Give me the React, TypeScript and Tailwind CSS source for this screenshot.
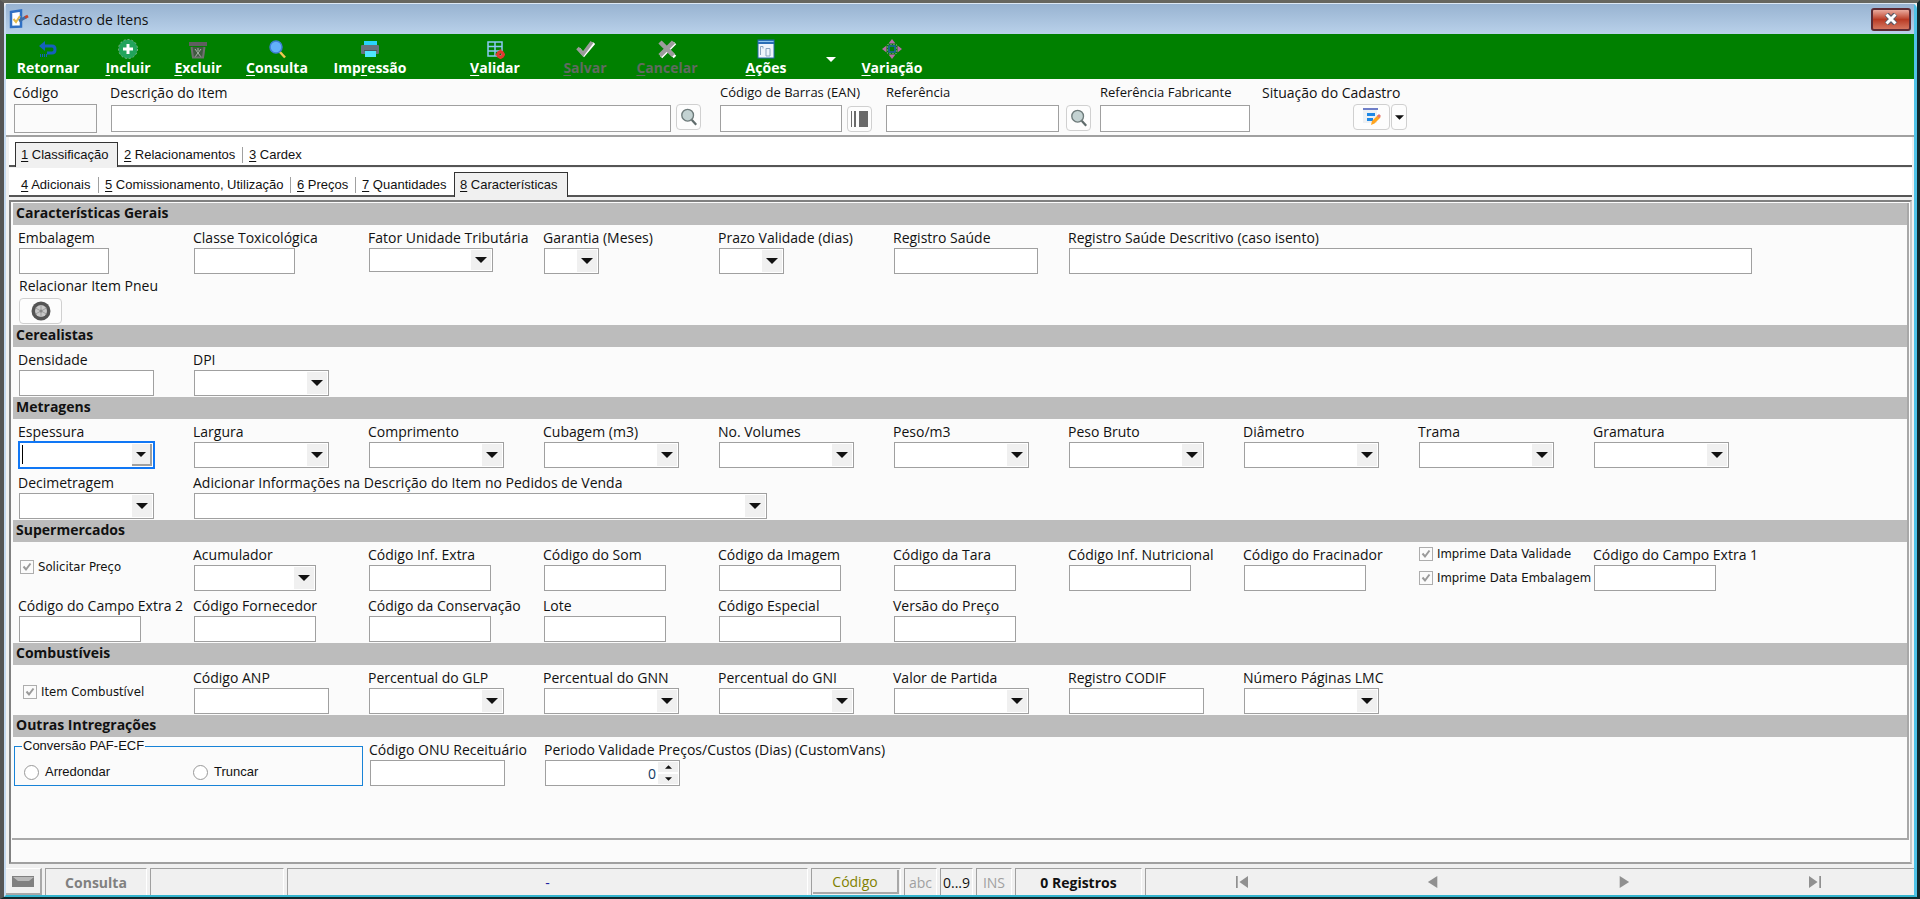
import { useId, useState } from 'react'
import type { ReactNode } from 'react'
import clsx from 'clsx'

// Underlines the shortcut letter of a caption
function Hotkey({ text, at = 0 }: { text: string; at?: number }) {
  return (
    <>
      {text.slice(0, at)}
      <span className="underline underline-offset-2">{text[at]}</span>
      {text.slice(at + 1)}
    </>
  )
}

function Arrow({ size = 'h-[6px] w-[12px]', flip = false }: { size?: string; flip?: boolean }) {
  return (
    <svg className={clsx(size, flip && 'rotate-180')} viewBox="0 0 12 6" fill="currentColor">
      <path d="M0 0h12L6 6z" />
    </svg>
  )
}

const labelClass = '-ml-px block h-[23px] pt-[2px] leading-[21px] whitespace-nowrap'

function TextField({ label, width = 'w-[135px]', cell = 'w-[175px]' }: { label: string; width?: string; cell?: string }) {
  const id = useId()
  return (
    <div className={clsx('h-[50px] shrink-0', cell)}>
      <label htmlFor={id} className={labelClass}>{label}</label>
      <input id={id} type="text" className={clsx('block h-[26px] border border-[#a0a0a0] bg-white px-1 outline-none', width)} />
    </div>
  )
}

function ComboField({ label, width = 'w-[135px]', cell = 'w-[175px]', height = 'h-[26px]', focused = false }: {
  label: string
  width?: string
  cell?: string
  height?: string
  focused?: boolean
}) {
  const id = useId()
  return (
    <div className={clsx('h-[50px] shrink-0', cell)}>
      <label htmlFor={id} className={labelClass}>{label}</label>
      <div className={clsx('relative border bg-white', width, height, focused ? 'border-[#1077f5] ring-1 ring-[#1077f5]' : 'border-[#a0a0a0]')}>
        <select id={id} className="block h-full w-full appearance-none bg-transparent px-1 outline-none">
          <option></option>
        </select>
        {focused && <span className="pointer-events-none absolute top-[2px] bottom-[3px] left-[2px] w-px bg-black" />}
        <span
          className={clsx(
            'pointer-events-none absolute top-px right-px bottom-px flex w-[20px] items-center justify-center bg-[#f0f0f0]',
            focused && 'border-r-2 border-b-2 border-[#a0a0a0]'
          )}
        >
          <Arrow size={focused ? 'h-[5px] w-[10px]' : undefined} />
        </span>
      </div>
    </div>
  )
}

function CheckField({ label }: { label: string }) {
  const [checked, setChecked] = useState(true)
  return (
    <label className="flex h-[24px] items-center gap-1 font-['DejaVu_Sans_Condensed','DejaVu_Sans',sans-serif] text-[13px] whitespace-nowrap">
      <span className="relative size-[14px]">
        <input
          type="checkbox"
          checked={checked}
          onChange={e => setChecked(e.target.checked)}
          className="block size-[14px] appearance-none border border-[#adadad] bg-[#fbfbfb]"
        />
        {checked && (
          <svg className="pointer-events-none absolute inset-0 size-[14px]" viewBox="0 0 14 14" fill="none" stroke="#9a9a9a" strokeWidth="2">
            <path d="M3.5 6.5L6 9.5l4.500-6" />
          </svg>
        )}
      </span>
      {label}
    </label>
  )
}

function Section({ title, children }: { title: string; children: ReactNode }) {
  return (
    <section>
      <h2 className="h-[22px] bg-[#bcbcbc] pl-[3px] leading-[20px] font-bold">{title}</h2>
      <div className="flex flex-col gap-px">{children}</div>
    </section>
  )
}

function Row({ children }: { children: ReactNode }) {
  return <div className="flex pl-[6px]">{children}</div>
}

function ToolButton({ label, at, width, disabled, icon }: {
  label: string
  at?: number
  width: string
  disabled?: boolean
  icon: ReactNode
}) {
  return (
    <button
      type="button"
      disabled={disabled}
      className={clsx('flex h-[45px] flex-col items-center gap-px pt-[5px] leading-[16px] font-bold', width, disabled ? 'text-[#5f6b5f]' : 'text-white')}
    >
      <svg className="size-[20px]" viewBox="0 0 20 20" fill="none">{icon}</svg>
      <span className="whitespace-nowrap">{at === undefined ? label : <Hotkey text={label} at={at} />}</span>
    </button>
  )
}

function Toolbar() {
  return (
    <nav className="flex h-[45px] bg-[#008000]">
      <ToolButton
        label="Retornar"
        width="w-[84px]"
        icon={
          <>
            <path d="M5 7h9q3 0 3 3.500T14 14H9" stroke="#1560bd" strokeWidth="3" />
            <path d="M1 7l6-5v10z" fill="#1560bd" />
            <path d="M2 16.500h8" stroke="#1560bd" strokeWidth="3" strokeDasharray="1 1" />
          </>
        }
      />
      <ToolButton
        label="Incluir"
        at={0}
        width="w-[76px]"
        icon={
          <>
            <circle cx="10" cy="10" r="9.500" fill="#22a45c" stroke="#7fb08a" strokeDasharray="2 2" />
            <path d="M10 5v10M5 10h10" stroke="#fff" strokeWidth="3" />
          </>
        }
      />
      <ToolButton
        label="Excluir"
        at={0}
        width="w-[64px]"
        icon={
          <>
            <path d="M1 3h18v4H1z" fill="#5f5f5f" />
            <path d="M3 8h14l-1 11H4z" fill="#3f5a3f" />
            <path d="M7 10l6 8M13 10l-6 8M10 9v3" stroke="#a9b5a9" />
            <path d="M3.500 8l1.500 10.500h10L16.500 8" stroke="#6f6f6f" strokeWidth="2" />
          </>
        }
      />
      <ToolButton
        label="Consulta"
        at={0}
        width="w-[94px]"
        icon={
          <>
            <path d="M12.500 12.500l5.500 6" stroke="#f0c850" strokeWidth="2.500" />
            <circle cx="9" cy="8" r="6" fill="#62b0fa" stroke="#3d7fd6" strokeWidth="1.500" />
          </>
        }
      />
      <ToolButton
        label="Impressão"
        at={3}
        width="w-[92px]"
        icon={
          <>
            <rect x="4" y="2" width="13" height="5" fill="#29d5fb" />
            <rect x="1" y="6" width="18" height="9" rx="1" fill="#66727e" />
            <rect x="5" y="12" width="11" height="6" fill="#4fe6ff" />
            <path d="M4 11.500h13" stroke="#4c565f" />
          </>
        }
      />
      <span className="w-[36px]" />
      <ToolButton
        label="Validar"
        at={0}
        width="w-[86px]"
        icon={
          <>
            <path d="M3 3h14v14H3zM3 7.500h14M3 12h14M10 3v14" stroke="#8cc8f5" strokeWidth="1.500" />
            <circle cx="15.500" cy="15.500" r="2.500" stroke="#e03a2f" strokeWidth="3" />
            <path d="M15.500 10.500v10M10.500 15.500h10" stroke="#e03a2f" strokeDasharray="2 6" strokeWidth="2" />
          </>
        }
      />
      <ToolButton
        label="Salvar"
        at={0}
        width="w-[94px]"
        disabled
        icon={
          <>
            <path d="M4 10l5 6 10-12" stroke="#fff" strokeWidth="3" />
            <path d="M2.500 9l5.500 6 9-12" stroke="#9c9c9c" strokeWidth="3.500" />
          </>
        }
      />
      <ToolButton
        label="Cancelar"
        at={0}
        width="w-[70px]"
        disabled
        icon={
          <>
            <path d="M4 4l14 14M18 4L4 18" stroke="#fff" strokeWidth="3.500" />
            <path d="M3 3l13.500 13.500M16.500 3L3 16.500" stroke="#9c9c9c" strokeWidth="4.500" />
          </>
        }
      />
      <span className="w-[28px]" />
      <ToolButton
        label="Ações"
        at={0}
        width="w-[72px]"
        icon={
          <>
            <rect x="2" y="1" width="16" height="18" fill="#eef4fb" stroke="#2566a8" />
            <path d="M2 3h16" stroke="#2a6db5" strokeWidth="4" />
            <path d="M2.500 2.500h15" stroke="#8fc4ee" />
            <path d="M4.500 16V7.500h2.500v2M10 17V9.500h4V17z" stroke="#8aa5c0" />
          </>
        }
      />
      <button type="button" aria-label="Mais ações" className="ml-[16px] flex w-[26px] items-center justify-center pt-[5px] text-white">
        <Arrow size="h-[5px] w-[10px]" />
      </button>
      <ToolButton
        label="Variação"
        at={0}
        width="w-[96px]"
        icon={
          <>
            <rect x="7" y="7" width="6" height="6" stroke="#1f5fa8" strokeWidth="1.500" />
            <path d="M10 0l3.500 4.500h-7zM10 20l3.500-4.500h-7zM0 10l4.500-3.500v7zM20 10l-4.500-3.500v7z" fill="#b86aa8" />
            <path d="M5.500 5.500h9v9h-9z" stroke="#9fb09f" strokeDasharray="1 2" />
          </>
        }
      />
    </nav>
  )
}

function HeaderField({ label, width, locked = false, small = false }: {
  label: string
  width: string
  locked?: boolean
  small?: boolean
}) {
  const id = useId()
  return (
    <div>
      <label
        htmlFor={id}
        className={clsx('block pt-[2px] leading-[23px] whitespace-nowrap', small ? 'text-[13px]' : '-ml-px', locked ? 'h-[25px]' : 'h-[26px]')}
      >
        {label}
      </label>
      <input
        id={id}
        type="text"
        readOnly={locked}
        className={clsx('block border border-[#a0a0a0] px-1 outline-none', width, locked ? 'h-[29px] bg-[#fbfbfb]' : 'h-[27px] bg-white')}
      />
    </div>
  )
}

function IconButton({ label, children, className = 'w-[25px]' }: { label: string; children: ReactNode; className?: string }) {
  return (
    <button type="button" aria-label={label} className={clsx('flex h-[26px] items-center justify-center rounded-[4px] border border-[#d0d0d0] bg-[#fdfdfd]', className)}>
      {children}
    </button>
  )
}

function SearchIcon() {
  return (
    <svg className="size-[18px]" viewBox="0 0 20 20" fill="none">
      <path d="M13 13l5 5.500" stroke="#5f6b6b" strokeWidth="2.500" />
      <circle cx="8.500" cy="8" r="6.500" fill="#c3d2d2" stroke="#6d7a7a" strokeWidth="1.500" />
    </svg>
  )
}

function Header() {
  return (
    <div className="flex h-[58px] items-start border-b-2 border-[#a0a0a0] bg-[#fbfbfb] pl-[8px]">
      <HeaderField label="Código" width="w-[83px]" locked />
      <div className="ml-[14px]">
        <HeaderField label="Descrição do Item" width="w-[560px]" />
      </div>
      <div className="ml-[5px] pt-[25px]">
        <IconButton label="Pesquisar item"><SearchIcon /></IconButton>
      </div>
      <div className="ml-[19px] w-[127px]">
        <HeaderField label="Código de Barras (EAN)" width="w-[122px]" small />
      </div>
      <div className="pt-[27px]">
        <IconButton label="Gerar código de barras">
          <svg className="h-[16px] w-[17px]" viewBox="0 0 17 16" fill="#6a6a6a">
            <path d="M0 0h1v16H0zM3 0h2v16H3zM8 0h9v16H8z" />
          </svg>
        </IconButton>
      </div>
      <div className="ml-[14px]">
        <HeaderField label="Referência" width="w-[173px]" small />
      </div>
      <div className="ml-[7px] pt-[26px]">
        <IconButton label="Pesquisar referência"><SearchIcon /></IconButton>
      </div>
      <div className="ml-[9px]">
        <HeaderField label="Referência Fabricante" width="w-[150px]" small />
      </div>
      <div className="ml-[12px] w-[145px]">
        <p className="h-[25px] pt-[2px] leading-[23px] whitespace-nowrap">Situação do Cadastro</p>
        <div className="flex justify-end gap-px">
          <IconButton label="Situação do cadastro" className="w-[37px]">
            <svg className="size-[18px]" viewBox="0 0 18 18">
              <rect x="0" y="2" width="14" height="13" fill="#eef1f4" />
              <rect x="0" y="0" width="15" height="2" fill="#6f7fc8" />
              <path d="M4 5h8v3H4zM4 10h6v3H4z" fill="#1e88e5" />
              <path d="M8 17l1-4 6-6 2.500 2.500-6 6z" fill="#ffa51f" />
              <path d="M14 8l2-2 2 2-2 2z" fill="#e57373" />
            </svg>
          </IconButton>
          <IconButton label="Opções da situação" className="w-[16px]"><Arrow size="h-[5px] w-[9px]" /></IconButton>
        </div>
      </div>
    </div>
  )
}

function Tabs({ items, active }: { items: { label: string; width: string }[]; active: number }) {
  return (
    <div role="tablist" className="flex h-[29px] items-end border-b-2 border-[#555] bg-white pl-[6px] text-[13px]">
      {items.map((tab, i) => (
        <button
          key={tab.label}
          type="button"
          role="tab"
          aria-selected={i === active}
          className={clsx(
            'flex items-center whitespace-nowrap',
            tab.width,
            i === active ? '-mb-[2px] h-[25px] border-x border-t border-[#333] bg-[#f0f0f0] pl-[5px]' : 'h-[20px] pl-[6px]'
          )}
        >
          <span className="grow text-left"><Hotkey text={tab.label} /></span>
          {i !== active && i + 1 !== active && i < items.length - 1 && <span className="h-[16px] w-px bg-[#a0a0a0]" />}
        </button>
      ))}
    </div>
  )
}

const mainTabs = [
  { label: '1 Classificação', width: 'w-[103px]' },
  { label: '2 Relacionamentos', width: 'w-[125px]' },
  { label: '3 Cardex', width: 'w-[66px]' }
]

const subTabs = [
  { label: '4 Adicionais', width: 'w-[84px]' },
  { label: '5 Comissionamento, Utilização', width: 'w-[192px]' },
  { label: '6 Preços', width: 'w-[65px]' },
  { label: '7 Quantidades', width: 'w-[98px]' },
  { label: '8 Características', width: 'w-[114px]' }
]

function RadioOption({ label }: { label: string }) {
  return (
    <label className="flex w-[169px] items-center gap-[6px]">
      <input type="radio" name="conversao" className="size-[15px] appearance-none rounded-full border border-[#999] bg-white checked:border-4 checked:border-[#555]" />
      {label}
    </label>
  )
}

function PeriodField() {
  const [days, setDays] = useState(0)
  return (
    <div className="h-[50px] shrink-0">
      <label htmlFor="periodo" className={labelClass}>Periodo Validade Preços/Custos (Dias) (CustomVans)</label>
      <div className="flex h-[26px] w-[135px] border border-[#a0a0a0] bg-white p-px">
        <input
          id="periodo"
          type="text"
          value={days}
          onChange={e => setDays(Number(e.target.value) || 0)}
          className="w-0 grow px-[2px] text-right text-[#123a63] outline-none"
        />
        <div className="flex w-[20px] flex-col gap-[2px]">
          <button type="button" aria-label="Aumentar" onClick={() => setDays(days + 1)} className="flex grow items-center justify-center bg-[#f0f0f0]">
            <Arrow size="h-[4px] w-[7px]" flip />
          </button>
          <button type="button" aria-label="Diminuir" onClick={() => setDays(days - 1)} className="flex grow items-center justify-center bg-[#f0f0f0]">
            <Arrow size="h-[4px] w-[7px]" />
          </button>
        </div>
      </div>
    </div>
  )
}

function Form() {
  return (
    <div className="grow border-r-2 border-b-2 border-[#a8a8a8] pl-px">
      <Section title="Características Gerais">
        <Row>
          <TextField label="Embalagem" width="w-[90px]" />
          <TextField label="Classe Toxicológica" width="w-[101px]" />
          <ComboField label="Fator Unidade Tributária" width="w-[124px]" height="h-[24px]" />
          <ComboField label="Garantia (Meses)" width="w-[55px]" />
          <ComboField label="Prazo Validade (dias)" width="w-[65px]" />
          <TextField label="Registro Saúde" width="w-[144px]" />
          <TextField label="Registro Saúde Descritivo (caso isento)" width="w-[683px]" cell="w-[683px]" />
        </Row>
        <Row>
          <div className="h-[49px]">
            <p className="h-[22px] leading-[19px] whitespace-nowrap">Relacionar Item Pneu</p>
            <IconButton label="Relacionar item pneu" className="w-[43px]">
              <svg className="size-[20px]" viewBox="0 0 20 20">
                <circle cx="10" cy="10" r="9.500" fill="#555" />
                <circle cx="10" cy="10" r="6" fill="#c8c8c8" />
                <path d="M10 4v12M4.500 7l11 6M15.500 7l-11 6" stroke="#a0a0a0" />
                <circle cx="10" cy="10" r="1.500" fill="#888" />
              </svg>
            </IconButton>
          </div>
        </Row>
      </Section>

      <Section title="Cerealistas">
        <Row>
          <TextField label="Densidade" />
          <ComboField label="DPI" />
        </Row>
      </Section>

      <Section title="Metragens">
        <Row>
          <ComboField label="Espessura" focused />
          <ComboField label="Largura" />
          <ComboField label="Comprimento" />
          <ComboField label="Cubagem (m3)" />
          <ComboField label="No. Volumes" />
          <ComboField label="Peso/m3" />
          <ComboField label="Peso Bruto" />
          <ComboField label="Diâmetro" />
          <ComboField label="Trama" />
          <ComboField label="Gramatura" />
        </Row>
        <Row>
          <ComboField label="Decimetragem" />
          <ComboField label="Adicionar Informações na Descrição do Item no Pedidos de Venda" width="w-[573px]" cell="w-[573px]" />
        </Row>
      </Section>

      <Section title="Supermercados">
        <Row>
          <div className="flex w-[175px] shrink-0 items-center pl-px">
            <CheckField label="Solicitar Preço" />
          </div>
          <ComboField label="Acumulador" width="w-[122px]" />
          <TextField label="Código Inf. Extra" width="w-[122px]" />
          <TextField label="Código do Som" width="w-[122px]" />
          <TextField label="Código da Imagem" width="w-[122px]" />
          <TextField label="Código da Tara" width="w-[122px]" />
          <TextField label="Código Inf. Nutricional" width="w-[122px]" />
          <TextField label="Código do Fracinador" width="w-[122px]" />
          <div className="w-[175px] shrink-0">
            <CheckField label="Imprime Data Validade" />
            <CheckField label="Imprime Data Embalagem" />
          </div>
          <TextField label="Código do Campo Extra 1" width="w-[122px]" />
        </Row>
        <Row>
          <TextField label="Código do Campo Extra 2" width="w-[122px]" />
          <TextField label="Código Fornecedor" width="w-[122px]" />
          <TextField label="Código da Conservação" width="w-[122px]" />
          <TextField label="Lote" width="w-[122px]" />
          <TextField label="Código Especial" width="w-[122px]" />
          <TextField label="Versão do Preço" width="w-[122px]" />
        </Row>
      </Section>

      <Section title="Combustíveis">
        <Row>
          <div className="flex w-[175px] shrink-0 items-center pt-[4px] pl-[4px]">
            <CheckField label="Item Combustível" />
          </div>
          <TextField label="Código ANP" />
          <ComboField label="Percentual do GLP" />
          <ComboField label="Percentual do GNN" />
          <ComboField label="Percentual do GNI" />
          <ComboField label="Valor de Partida" />
          <TextField label="Registro CODIF" />
          <ComboField label="Número Páginas LMC" />
        </Row>
      </Section>

      <Section title="Outras Intregrações">
        <div className="flex pl-px">
          <fieldset className="mr-[7px] h-[49px] w-[346px] shrink-0 border border-[#1883d7] pl-[9px] font-['Liberation_Sans',sans-serif] text-[13px]">
            <legend className="-ml-[2px] px-px leading-[18px]">Conversão PAF-ECF</legend>
            <div className="flex h-[34px] items-center">
              <RadioOption label="Arredondar" />
              <RadioOption label="Truncar" />
            </div>
          </fieldset>
          <TextField label="Código ONU Receituário" />
          <PeriodField />
        </div>
      </Section>
    </div>
  )
}

const navIcons = [
  { label: 'Primeiro', d: 'M0 0h2v14H0zM14 0v14L4 7z' },
  { label: 'Anterior', d: 'M12 0v14L1 7z' },
  { label: 'Próximo', d: 'M2 0v14l11-7z' },
  { label: 'Último', d: 'M0 0v14l10-7zM12 0h2v14h-2z' }
]

const panelClass = 'flex shrink-0 items-center justify-center border-t border-r border-l border-[#a0a0a0] border-r-white'

function StatusBar() {
  return (
    <footer className="flex h-[27px] gap-[3px] bg-[#f0f0f0]">
      <button type="button" aria-label="Teclado" className="flex w-[36px] shrink-0 items-center justify-center border-t border-r-2 border-b-2 border-[#a8a8a8] border-t-white">
        <svg className="h-[11px] w-[22px]" viewBox="0 0 22 11">
          <rect width="22" height="11" fill="#808080" />
          <path d="M1 1l5 4h11l5-4z" fill="#b8b8b8" />
        </svg>
      </button>
      <div className={clsx(panelClass, 'w-[102px] font-bold text-[#808080]')}>Consulta</div>
      <div className={clsx(panelClass, 'w-[134px]')} />
      <div className={clsx(panelClass, 'min-w-[60px] grow text-[#2020a0]')}>-</div>
      <div className={clsx(panelClass, 'w-[90px] p-px')}>
        <button type="button" className="h-full w-full border-r-2 border-b-2 border-[#a8a8a8] text-[#808000]">Código</button>
      </div>
      <div className={clsx(panelClass, 'w-[33px] text-[#a0a0a0]')}>abc</div>
      <div className={clsx(panelClass, 'w-[33px]')}>0...9</div>
      <div className={clsx(panelClass, 'w-[36px] text-[#a0a0a0]')}>INS</div>
      <div className={clsx(panelClass, 'w-[127px] font-bold')}>0 Registros</div>
      <div className="flex w-[769px] border-t border-l border-[#a0a0a0] pr-[4px]">
        {navIcons.map(icon => (
          <button key={icon.label} type="button" aria-label={icon.label} className="flex grow items-center justify-center">
            <svg className="h-[12px] w-[14px]" viewBox="0 0 14 14" fill="#909090"><path d={icon.d} /></svg>
          </button>
        ))}
      </div>
    </footer>
  )
}

function TitleBar() {
  return (
    <header className="flex h-[30px] items-center bg-linear-to-b from-[#98b3d1] to-[#b9d1ea] pr-[3px] pl-[3px]">
      <svg className="size-[20px]" viewBox="0 0 20 20" fill="none">
        <path d="M2 3l10-1.500v16L2 18z" fill="#fff" stroke="#2f6fc4" strokeWidth="2.500" />
        <path d="M4.500 10l2.500 3 4-6" stroke="#e2b84a" strokeWidth="2" />
        <path d="M10 12l7-4" stroke="#3f6ea8" strokeWidth="3" />
        <path d="M16 8.500l3-1.500" stroke="#c4452c" strokeWidth="3" />
      </svg>
      <h1 className="grow pl-[5px]">Cadastro de Itens</h1>
      <button
        type="button"
        aria-label="Fechar"
        className="flex h-[23px] w-[40px] items-center justify-center rounded-[3px] border-2 border-[#5d2a33] bg-linear-to-b from-[#e9a99d] via-[#b93a24] via-50% to-[#d4755f]"
      >
        <svg className="h-[12px] w-[14px]" viewBox="0 0 14 12" fill="none">
          <path d="M2.500 1l9 10M11.500 1l-9 10" stroke="#5a5a66" strokeWidth="5" />
          <path d="M2.500 1.500l9 9M11.500 1.500l-9 9" stroke="#fff" strokeWidth="3" />
        </svg>
      </button>
    </header>
  )
}

export default function App() {
  return (
    <div className="flex min-h-screen w-full flex-col overflow-x-hidden border-t-[3px] border-r-[3px] border-b-2 border-l-[4px] border-t-[#66665f] border-r-[#10282c] border-b-[#10282c] border-l-[#555] bg-[#f0f0f0] font-['Open_Sans',sans-serif] text-[14px] text-[#111]">
      <div className="flex grow flex-col rounded-t-[6px] border-t border-r-[3px] border-b-2 border-l-2 border-t-[#dce8f5] border-r-[#4fc3e8] border-b-[#35b5cf] border-l-[#c5daf0]">
        <TitleBar />
        <Toolbar />
        <Header />
        <main className="flex grow flex-col pr-[2px] pb-[4px] pl-[3px]">
          <div className="bg-white pt-px font-['Liberation_Sans',sans-serif]">
            <Tabs items={mainTabs} active={0} />
            <div className="h-px bg-[#f0f0f0]" />
            <Tabs items={subTabs} active={4} />
          </div>
          <div className="mt-[3px] flex grow flex-col border-2 border-t-[#808080] border-r-[#c8c8c8] border-b-[#a0a0a0] border-l-[#808080] bg-[#fbfbfb] pt-px pr-px pb-[22px] pl-px">
            <Form />
          </div>
        </main>
        <StatusBar />
      </div>
    </div>
  )
}
